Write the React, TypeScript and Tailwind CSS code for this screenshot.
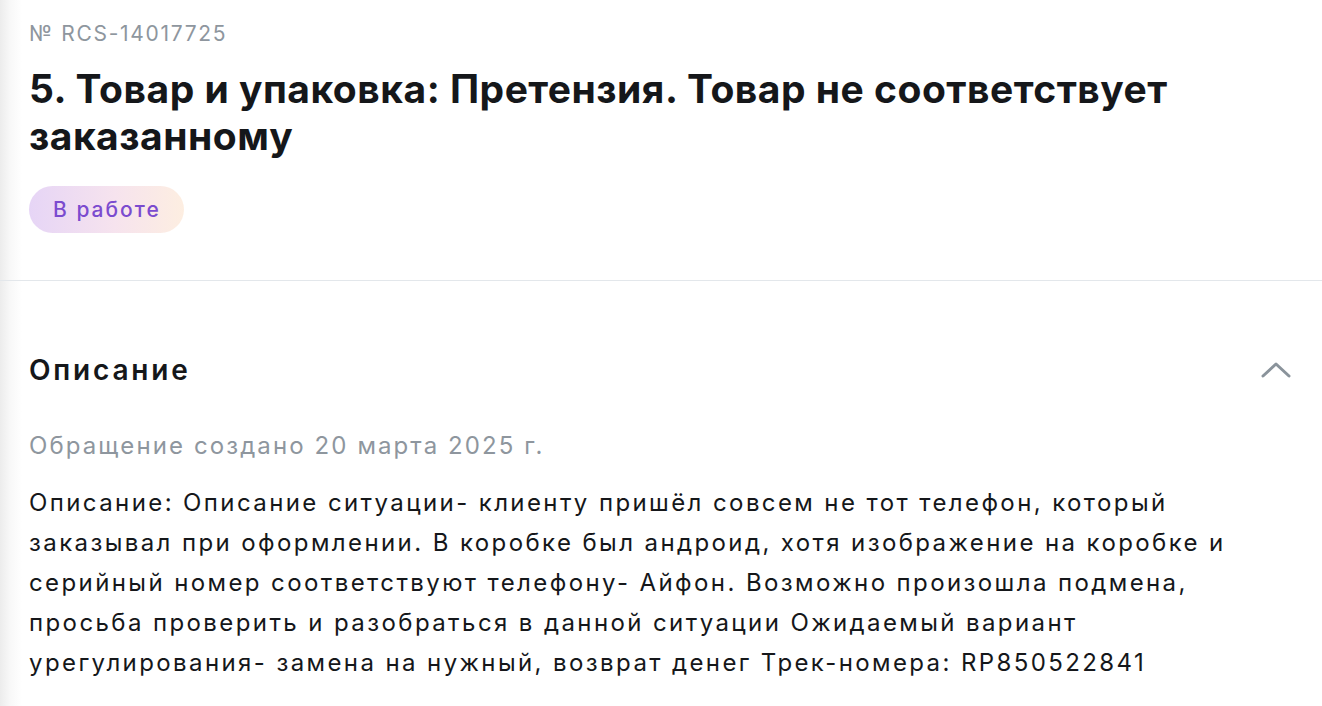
import React from "react";

export default function App() {
  return (
    <div
      className="w-[1322px] h-[706px] overflow-hidden bg-[linear-gradient(to_right,#ececec_0px,#f8f8f8_10px,#ffffff_22px)] text-[#15171a]"
      style={{ fontFamily: "Inter, 'Noto Sans', sans-serif" }}
    >
      <div className="px-[29px] pt-[20px] pb-[47px]">
        <div className="text-[21px] leading-[28px] tracking-[1.7px] text-[#8e969e]">№ RCS-14017725</div>
        <h1 className="mt-[17px] text-[39px] leading-[47px] font-bold tracking-[0.5px] w-[1200px]">
          5. Товар и упаковка: Претензия. Товар не соответствует заказанному
        </h1>
        <div className="mt-[27px] inline-flex h-[47px] items-center rounded-full bg-[linear-gradient(to_right,#e6d5f6,#f6e3ee_55%,#fdeee1)] pl-[24px] pr-[23px] text-[21px] font-medium tracking-[2px] text-[#7b4bcf]">
          В работе
        </div>
      </div>
      <div className="h-px bg-[#e3e7eb]" />
      <div className="px-[29px] pt-[71px]">
        <div className="flex items-center justify-between">
          <h2 className="text-[28px] leading-[36px] font-semibold tracking-[2.8px]">Описание</h2>
          <svg width="34" height="20" viewBox="0 0 34 20">
            <path d="M4 16 L17 4 L30 16" fill="none" stroke="#8a939b" strokeWidth="3" strokeLinecap="round" strokeLinejoin="round" />
          </svg>
        </div>
        <div className="mt-[42px] text-[24px] leading-[32px] tracking-[2.1px] text-[#8e969e]">Обращение создано 20 марта 2025 г.</div>
        <p className="mt-[21px] text-[24px] leading-[40px] tracking-[2.4px] w-[1230px]">
          Описание: Описание ситуации- клиенту пришёл совсем не тот телефон, который заказывал при оформлении. В коробке был андроид, хотя изображение на коробке и серийный номер соответствуют телефону- Айфон. Возможно произошла подмена, просьба проверить и разобраться в данной ситуации Ожидаемый вариант урегулирования- замена на нужный, возврат денег Трек-номера: RP850522841
        </p>
      </div>
    </div>
  );
}
